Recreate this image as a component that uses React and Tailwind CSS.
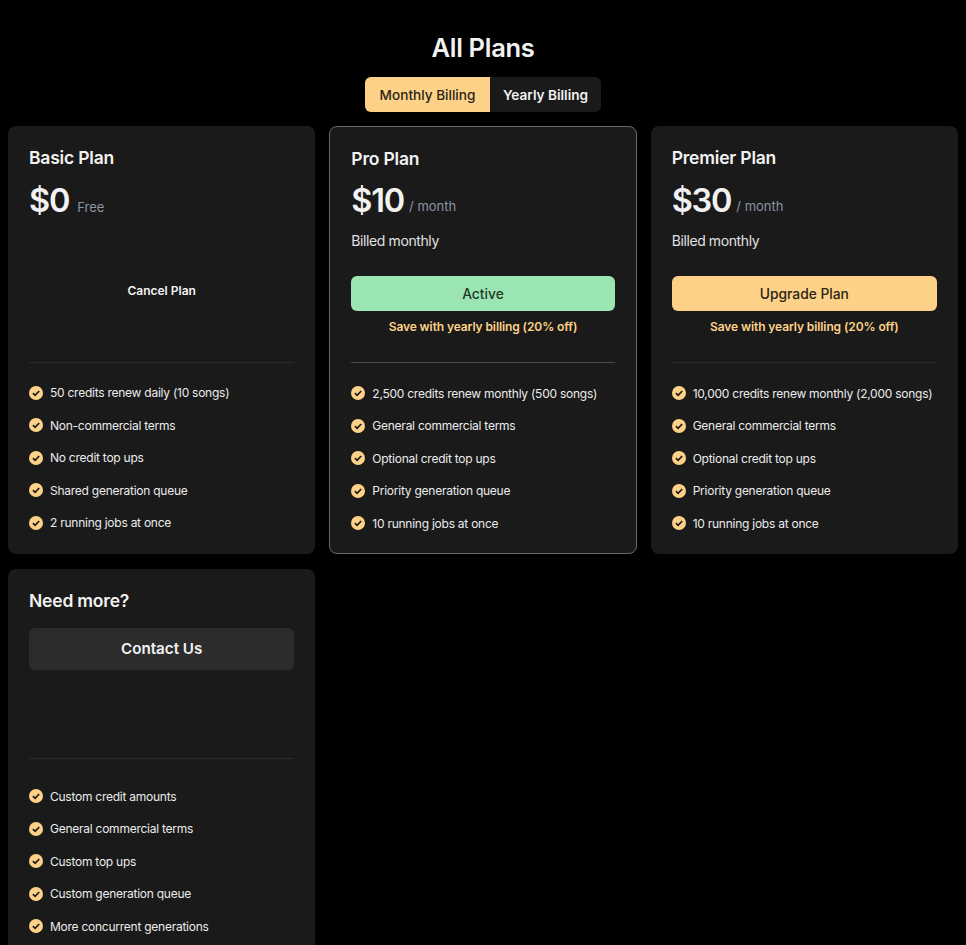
const plans = [
  {
    name: 'Basic Plan',
    price: '$0',
    unit: 'Free',
    features: ['50 credits renew daily (10 songs)', 'Non-commercial terms', 'No credit top ups', 'Shared generation queue', '2 running jobs at once'],
  },
  {
    name: 'Pro Plan',
    price: '$10',
    unit: '/ month',
    billed: 'Billed monthly',
    active: true,
    features: ['2,500 credits renew monthly (500 songs)', 'General commercial terms', 'Optional credit top ups', 'Priority generation queue', '10 running jobs at once'],
  },
  {
    name: 'Premier Plan',
    price: '$30',
    unit: '/ month',
    billed: 'Billed monthly',
    features: ['10,000 credits renew monthly (2,000 songs)', 'General commercial terms', 'Optional credit top ups', 'Priority generation queue', '10 running jobs at once'],
  },
]

const extraFeatures = ['Custom credit amounts', 'General commercial terms', 'Custom top ups', 'Custom generation queue', 'More concurrent generations']

function CheckIcon() {
  return (
    <svg viewBox="0 0 14 14" className="h-[14px] w-[14px] shrink-0" aria-hidden="true">
      <circle cx="7" cy="7" r="7" fill="#fdd288" />
      <path d="M3.9 7.2 6.1 9.3 10.2 5" fill="none" stroke="#1a1a1a" strokeWidth="1.7" />
    </svg>
  )
}

function FeatureList({ items }) {
  return (
    <ul className="flex flex-col gap-[13.5px]">
      {items.map((item) => (
        <li key={item} className="flex h-[19px] items-center gap-[7px] text-[12px] leading-[19px] tracking-[-0.25px] text-[#ececec]">
          <CheckIcon />
          <span className="whitespace-nowrap">{item}</span>
        </li>
      ))}
    </ul>
  )
}

function PlanCard({ plan }) {
  return (
    <div className={`flex h-[428px] flex-col rounded-lg bg-[#1a1a1a] px-[21px] pt-[20px] ${plan.active ? 'border border-[#6b6b6b]' : ''}`}>
      <h3 className="text-[17.5px] font-semibold leading-[24px] tracking-[-0.2px] text-[#f2f2f2]">{plan.name}</h3>
      <div className={`flex h-[40px] items-end ${plan.active ? 'mt-[10px]' : 'mt-[11px]'}`}>
        <span className="text-[32.5px] font-semibold leading-[40px] tracking-[-1.2px] text-[#f2f2f2]">{plan.price}</span>
        <span className={`text-[13px] leading-[20px] text-[#8b94a3] ${plan.billed ? 'mb-[5px] ml-[5px]' : 'mb-[4px] ml-[8px]'}`}>{plan.unit}</span>
      </div>
      {plan.billed ? (
        <>
          <p className="mt-[10px] text-[14px] leading-[20px] tracking-[-0.4px] text-[#e0e0e0]">{plan.billed}</p>
          <button
            type="button"
            className={`mt-[25px] h-[35px] rounded-md pt-px text-[13.8px] font-medium ${plan.active ? 'bg-[#9be5b3] text-[#1d3b2a]' : 'bg-[#fdd288] text-[#2a2416]'}`}
          >
            {plan.active ? 'Active' : 'Upgrade Plan'}
          </button>
          <p className="mt-[7px] text-center text-[12px] font-semibold leading-[18px] tracking-[-0.1px] text-[#fdd288]">Save with yearly billing (20% off)</p>
        </>
      ) : (
        <div className="flex h-[114.5px] items-center justify-center pt-[25px]">
          <button type="button" className="text-[12px] font-semibold text-[#f2f2f2]">Cancel Plan</button>
        </div>
      )}
      <div className={`mb-[20.5px] mt-[26px] h-px shrink-0 ${plan.active ? 'bg-[#4a4a4a]' : 'bg-[#2c2c2c]'}`} />
      <FeatureList items={plan.features} />
    </div>
  )
}

export default function App() {
  return (
    <div className="h-[945px] overflow-hidden bg-black px-2 font-['Inter',sans-serif]">
      <h1 className="pt-[32px] text-center text-[25.5px] font-semibold leading-[32px] tracking-[-0.3px] text-[#f2f2f2]">All Plans</h1>
      <div className="mt-[13px] flex justify-center">
        <div className="flex h-[35px] overflow-hidden rounded-md bg-[#1a1a1a] text-[13.6px] font-medium">
          <button type="button" className="w-[125px] bg-[#fdd288] pt-px text-[#2a2416]">Monthly Billing</button>
          <button type="button" className="w-[111px] pt-px font-semibold text-[#f2f2f2]">Yearly Billing</button>
        </div>
      </div>
      <div className="mt-[14px] grid grid-cols-3 gap-x-[14px] gap-y-[15px]">
        {plans.map((plan) => <PlanCard key={plan.name} plan={plan} />)}
        <div className="flex flex-col rounded-lg bg-[#1a1a1a] px-[21px] pb-[21px] pt-[20px]">
          <h3 className="text-[17.5px] font-semibold leading-[24px] tracking-[-0.2px] text-[#f2f2f2]">Need more?</h3>
          <button type="button" className="mt-[15px] h-[42px] rounded-md bg-[#2c2c2c] pt-px text-[15.2px] font-semibold text-[#f2f2f2]">Contact Us</button>
          <div className="mb-[27.5px] mt-[88px] h-px shrink-0 bg-[#2c2c2c]" />
          <FeatureList items={extraFeatures} />
        </div>
      </div>
    </div>
  )
}
